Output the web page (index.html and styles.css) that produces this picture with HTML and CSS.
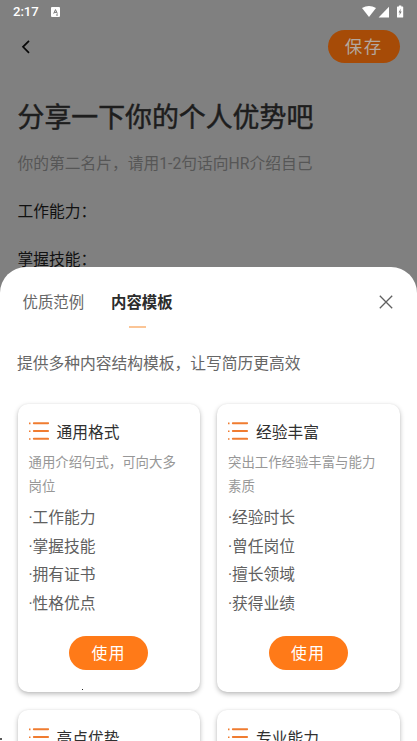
FILE: index.html
```html
<!DOCTYPE html>
<html lang="zh-CN">
<head>
<meta charset="utf-8">
<meta name="viewport" content="width=device-width, initial-scale=1">
<title>个人优势</title>
<link rel="stylesheet" href="styles.css">
</head>
<body>
<svg class="defs" width="0" height="0"><defs>
<symbol id="list" viewBox="0 0 20 18"><path d="M4.8 1.2H19.2M4.8 9H19.2M4.8 16.8H19.2" stroke="#f07c30" stroke-width="1.9" stroke-linecap="round"/><path d="M0 1.4h1.5M0 9.2h1.5M0 17h1.5" stroke="#f07c30" stroke-width="1.6"/></symbol>
</defs></svg>
<main class="screen">
  <section class="page">
    <div class="status">
      <span class="time">2:17</span>
      <svg class="app" width="9" height="10" viewBox="0 0 9 10"><rect width="9" height="10" rx="1" fill="#fff"/><path d="M2.7 6.6 4.5 2.6 6.3 6.6M3.3 5.4h2.4M5 8h2" fill="none" stroke="#777" stroke-width="1"/></svg>
      <svg class="signals" width="42" height="14" viewBox="0 0 42 14"><path d="M0 3.1Q7 -1 14 3.1L7 12Z" fill="#fff"/><path d="M27 1.8V12.4H16.6Z" fill="#fff"/><path d="M35.6 1.4h1.3V.4h2.4v1h1.3q.6 0 .6.6v10q0 .6-.6.6h-5q-.6 0-.6-.6V2q0-.6.6-.6Z" fill="#fff"/><path d="M38.8 3.4 36.6 7.4H37.9L37.3 10.5 39.7 6.4H38.3Z" fill="#777"/></svg>
    </div>
    <div class="nav">
      <svg width="10" height="16" viewBox="0 0 10 16"><path d="M8 1.8 2 7.8 8 13.8" fill="none" stroke="#080808" stroke-width="1.7"/></svg>
      <span class="save">保存</span>
    </div>
    <h1>分享一下你的个人优势吧</h1>
    <p class="hint">你的第二名片，请用1-2句话向HR介绍自己</p>
    <p class="line">工作能力：</p>
    <p class="line">掌握技能：</p>
  </section>
  <section class="sheet">
    <div class="tabs">
      <span class="tab">优质范例</span>
      <span class="tab active">内容模板</span>
      <svg class="close" width="14" height="14" viewBox="0 0 14 14"><path d="M.8.8 13.2 13.2M13.2.8.8 13.2" stroke="#606060" stroke-width="1.3"/></svg>
    </div>
    <p class="intro">提供多种内容结构模板，让写简历更高效</p>
    <div class="cards">
      <article class="card">
        <h2><svg width="20" height="18"><use href="#list"/></svg><span>通用格式</span></h2>
        <p class="desc">通用介绍句式，可向大多岗位</p>
        <ul><li>·工作能力</li><li>·掌握技能</li><li>·拥有证书</li><li>·性格优点</li></ul>
        <span class="use">使用</span>
      </article>
      <article class="card">
        <h2><svg width="20" height="18"><use href="#list"/></svg><span>经验丰富</span></h2>
        <p class="desc">突出工作经验丰富与能力素质</p>
        <ul><li>·经验时长</li><li>·曾任岗位</li><li>·擅长领域</li><li>·获得业绩</li></ul>
        <span class="use">使用</span>
      </article>
      <article class="card">
        <h2><svg width="20" height="18"><use href="#list"/></svg><span>高点优势</span></h2>
      </article>
      <article class="card">
        <h2><svg width="20" height="18"><use href="#list"/></svg><span>专业能力</span></h2>
      </article>
    </div>
  </section>
  <i class="speck speck-card"></i>
  <i class="speck speck-edge"></i>
</main>
</body>
</html>
```
FILE: styles.css
```css
* { box-sizing: border-box; }
html, body { margin: 0; height: 100%; overflow: hidden; }
body { font-family: Roboto, "Noto Sans CJK SC", sans-serif; font-size: 15.75px; background: #808080; }
h1, h2, p, ul { margin: 0; padding: 0; font-weight: 400; }
svg { display: block; flex: none; }
.defs { position: absolute; }
.screen { position: relative; height: 741px; overflow: hidden; }

.page { height: 267px; overflow: hidden; }
.status { height: 23px; padding: 0 13px; display: flex; align-items: center; color: #fff; }
.time { font-size: 13.2px; font-weight: 500; letter-spacing: -.1px; width: 38px; }
.signals { margin-left: auto; }
.nav { height: 47px; padding: 0 17.5px 0 20.5px; display: flex; align-items: center; justify-content: space-between; }
.save { width: 71.5px; height: 33px; border-radius: 17px; background: #a64b07; color: #b3a79e; font-size: 17.5px; letter-spacing: 1.6px; line-height: 34px; text-align: center; }
h1 { margin-top: 28px; padding-left: 17.5px; font-size: 26.9px; line-height: 40px; color: #1d1d1d; -webkit-text-stroke: .5px #1d1d1d; white-space: nowrap; }
.hint { margin-top: 14px; padding-left: 17.5px; line-height: 24px; color: #565656; }
.line { margin-top: 24px; padding-left: 17.5px; line-height: 24px; color: #111; }

.sheet { height: 520px; background: #fff; border-radius: 26px 26px 0 0; }
.tabs { height: 61px; padding: 23px 24px 0 22.5px; display: flex; align-items: flex-start; }
.tab { line-height: 26px; font-size: 15.4px; color: #666; margin-right: 27px; }
.active { color: #2c2c2c; font-weight: 700; display: flex; flex-direction: column; align-items: center; }
.active::after { content: ""; width: 17px; height: 2px; margin-top: 10px; margin-right: 8px; background: #fbc596; }
.close { margin: 5px 0 0 auto; }
.intro { margin-top: 22px; padding-left: 17px; line-height: 27px; color: #666; }
.cards { margin-top: 27px; padding: 0 17.5px; display: grid; grid-template-columns: 1fr 1fr; column-gap: 17px; row-gap: 18px; }
.card { height: 288px; padding: 14px 11px; border-radius: 10px; background: #fff; box-shadow: 0 2px 5px rgba(0,0,0,.27), 0 0 2px rgba(0,0,0,.06); display: flex; flex-direction: column; }
h2 { display: flex; align-items: center; gap: 8px; font-size: 15.75px; line-height: 26px; color: #303030; }
h2 span { padding-top: 2px; margin-bottom: -2px; }
.desc { margin-top: 7px; font-size: 13.4px; line-height: 24px; color: #979797; }
ul { margin-top: 5px; list-style: none; color: #606060; }
li { line-height: 28.7px; }
.use { margin-top: 17px; align-self: center; width: 79px; height: 34px; border-radius: 17px; background: #ff7a18; color: #fff; font-size: 15.75px; letter-spacing: 1.4px; line-height: 35px; text-align: center; }
.speck { position: absolute; background: #222; width: 1px; height: 1px; }
.speck-card { left: 82px; top: 689px; }
.speck-edge { left: 0; top: 738px; width: 2px; height: 2px; border-radius: 1px; }
```
